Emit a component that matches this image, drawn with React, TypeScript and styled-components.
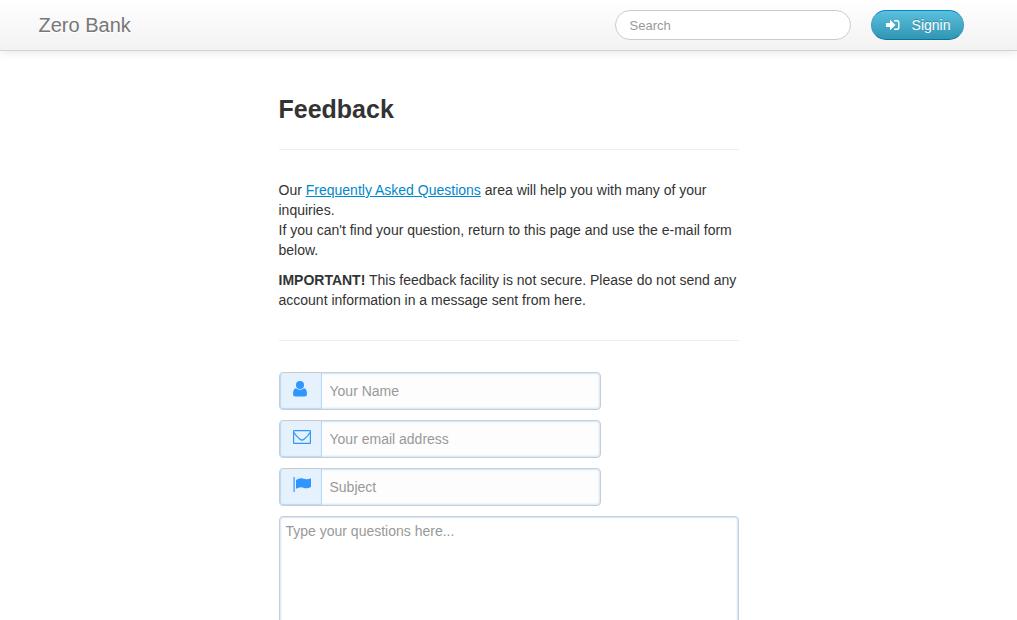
import React from "react";
import styled, { createGlobalStyle } from "styled-components";

const font = `"Liberation Sans", Arial, Helvetica, sans-serif`;

const GlobalStyle = createGlobalStyle`
  *, *::before, *::after { box-sizing: border-box; }
  body {
    margin: 0;
    background: #fff;
    color: #333;
    font: 14px/20px ${font};
  }
  button, input, textarea { font-family: inherit; }
`;

const Navbar = styled.header`
  display: flex;
  justify-content: center;
  padding: 0 20px;
  border-bottom: 1px solid #d4d4d4;
  background: linear-gradient(to bottom, #fff, #f2f2f2);
  box-shadow: 0 1px 10px rgba(0, 0, 0, 0.1);
`;

const NavInner = styled.div`
  display: flex;
  align-items: center;
  gap: 20px;
  width: 100%;
  max-width: 940px;
  height: 50px;
  padding-right: 15px;
`;

const Brand = styled.a`
  margin-right: auto;
  color: #777;
  font-size: 20px;
  text-decoration: none;
  text-shadow: 0 1px 0 #fff;
`;

const SearchInput = styled.input`
  width: 236px;
  height: 30px;
  padding: 4px 14px;
  border: 1px solid #ccc;
  border-radius: 15px;
  background: #fff;
  color: #555;
  font-size: 13px;
  line-height: 20px;
  &::placeholder { color: #999; opacity: 1; }
`;

const SigninButton = styled.button`
  display: flex;
  align-items: center;
  gap: 12px;
  height: 30px;
  padding: 0 12px 0 14px;
  border: 1px solid #3a9dbb;
  border-top-color: #0088cc;
  border-bottom-color: #0b7397;
  border-radius: 15px;
  background: linear-gradient(to bottom, #5bc0de, #2f96b4);
  color: #fff;
  font-size: 14px;
  line-height: 20px;
  text-shadow: 0 -1px 0 rgba(0, 0, 0, 0.25);
`;

const Main = styled.main`
  max-width: 460px;
  margin: 0 auto;
  padding: 48px 0 30px;
`;

const Title = styled.h1`
  margin: 0;
  font-size: 25px;
  line-height: 20px;
`;

const Divider = styled.hr`
  margin: 30px 0;
  border: 0;
  border-top: 1px solid #eee;
`;

const Paragraph = styled.p`
  margin: 0 0 10px;
`;

const Link = styled.a`
  color: #0088cc;
  text-decoration: underline;
`;

const Form = styled.form`
  display: flex;
  flex-direction: column;
  align-items: flex-start;
  gap: 10px;
  padding-top: 1px;
`;

const Field = styled.div`
  display: flex;
  width: 70%;
  height: 38px;
  border: 1px solid #ccc;
  border-radius: 4px;
  background: #fdfdfd;
  box-shadow: inset 0 0 2px 1px #cbe6ff;
`;

const AddOn = styled.label`
  display: flex;
  align-items: center;
  width: 42px;
  padding: 0 0 4px 13px;
  border-right: 1px solid #b5dafc;
  border-radius: 3px 0 0 3px;
  background: #e5f1fd;
  box-shadow: inset 1px 0 1px #b5dafc, inset 0 -1px 1px #b5dafc;
`;

const FieldInput = styled.input`
  flex: 1;
  min-width: 0;
  padding: 0 8px;
  border: 0;
  background: transparent;
  color: #555;
  font-size: 14px;
  &::placeholder { color: #999; opacity: 1; }
`;

const Message = styled.textarea`
  display: block;
  width: 100%;
  height: 210px;
  padding: 4px 6px;
  border: 1px solid #ccc;
  border-radius: 4px;
  background: #fff;
  box-shadow: inset 0 0 2px 1px #cbe6ff;
  color: #555;
  font-size: 14px;
  line-height: 20px;
  resize: none;
  &::placeholder { color: #999; opacity: 1; }
`;

const SigninIcon = () => (
  <svg width="14" height="12" viewBox="0 0 14 12" fill="#fff" aria-hidden="true">
    <path d="M0 4h4V.8L9.500 6 4 11.200V8H0z" />
    <path d="M8 1h3q2.500 0 2.500 2.500v5Q13.500 11 11 11H8V9.500h3q1 0 1-1v-5q0-1-1-1H8z" />
  </svg>
);

const UserIcon = () => (
  <svg width="14" height="16" viewBox="1 0 14 16" fill="#2f96ff" aria-hidden="true">
    <circle cx="8" cy="4" r="4" />
    <path d="M4 7.200q4 3.200 8 0 3 .6 3 5.800 0 2.500-2.300 2.500H3.300Q1 15.500 1 13 1 7.800 4 7.200z" />
  </svg>
);

const EnvelopeIcon = () => (
  <svg width="18" height="14" viewBox="0 0 18 14" fill="none" stroke="#2f96ff" aria-hidden="true">
    <rect x=".6" y=".6" width="16.800" height="12.800" rx=".5" strokeWidth="1.200" />
    <path d="M1 2.500Q3 6 7 9.200 9 10.800 11 9.200 15 6 17 2.500" strokeWidth="1.300" />
  </svg>
);

const FlagIcon = () => (
  <svg width="18" height="16" viewBox="0 0 18 16" fill="#2f96ff" aria-hidden="true">
    <path d="M.5 0h1.200v15H.5z" />
    <path d="M3 3Q6 1 8.500 1.300c2.500.4 4.500 2 9.500 0V10q-4 2.200-7.500.8T3 11.800z" />
  </svg>
);

const fields = [
  { id: "name", placeholder: "Your Name", Icon: UserIcon },
  { id: "email", placeholder: "Your email address", Icon: EnvelopeIcon },
  { id: "subject", placeholder: "Subject", Icon: FlagIcon },
];

export default function App() {
  return (
    <>
      <GlobalStyle />
      <Navbar>
        <NavInner>
          <Brand href="#">Zero Bank</Brand>
          <SearchInput type="text" placeholder="Search" aria-label="Search" />
          <SigninButton type="button">
            <SigninIcon />
            Signin
          </SigninButton>
        </NavInner>
      </Navbar>
      <Main>
        <Title>Feedback</Title>
        <Divider />
        <Paragraph>
          Our <Link href="#">Frequently Asked Questions</Link> area will help you with many of your inquiries.
          <br />
          If you can't find your question, return to this page and use the e-mail form below.
        </Paragraph>
        <Paragraph>
          <strong>IMPORTANT!</strong> This feedback facility is not secure. Please do not send any account
          information in a message sent from here.
        </Paragraph>
        <Divider />
        <Form>
          {fields.map(({ id, placeholder, Icon }) => (
            <Field key={id}>
              <AddOn htmlFor={id} aria-label={placeholder}>
                <Icon />
              </AddOn>
              <FieldInput id={id} type="text" placeholder={placeholder} />
            </Field>
          ))}
          <Message placeholder="Type your questions here..." aria-label="Your questions" />
        </Form>
      </Main>
    </>
  );
}
